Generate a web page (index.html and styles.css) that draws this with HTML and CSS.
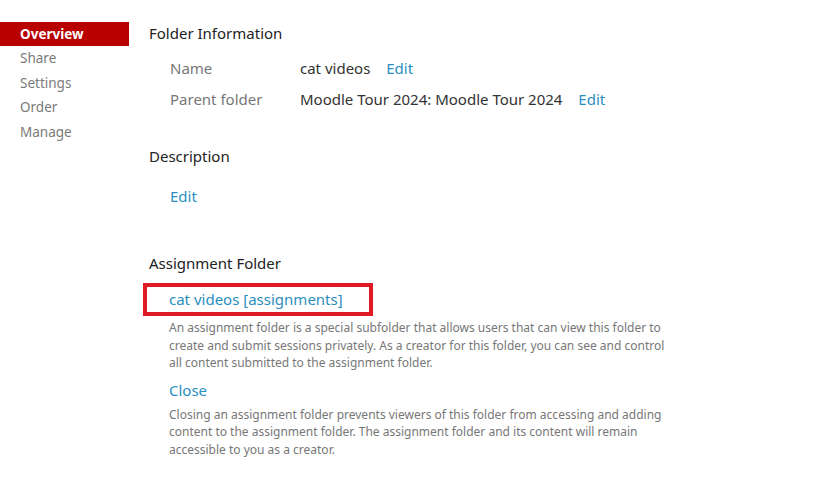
FILE: index.html
```html
<!DOCTYPE html>
<html>
<head>
<meta charset="utf-8">
<link rel="stylesheet" href="styles.css">
</head>
<body>
<div class="page">
  <nav class="sidebar">
    <div class="nav-item active">Overview</div>
    <div class="nav-item">Share</div>
    <div class="nav-item">Settings</div>
    <div class="nav-item">Order</div>
    <div class="nav-item">Manage</div>
  </nav>
  <main class="content">
    <h2 class="section-title">Folder Information</h2>
    <div class="info-table">
      <div class="info-label">Name</div>
      <div class="info-value">cat videos <a class="link edit">Edit</a></div>
      <div class="info-label">Parent folder</div>
      <div class="info-value">Moodle Tour 2024: Moodle Tour 2024 <a class="link edit">Edit</a></div>
    </div>
    <h2 class="section-title desc-title">Description</h2>
    <div class="desc-edit"><a class="link">Edit</a></div>
    <h2 class="section-title assign-title">Assignment Folder</h2>
    <div class="assign-box"><a class="link">cat videos [assignments]</a></div>
    <p class="help">An assignment folder is a special subfolder that allows users that can view this folder to create and submit sessions privately. As a creator for this folder, you can see and control all content submitted to the assignment folder.</p>
    <div class="close-link"><a class="link">Close</a></div>
    <p class="help help-close">Closing an assignment folder prevents viewers of this folder from accessing and adding content to the assignment folder. The assignment folder and its content will remain accessible to you as a creator.</p>
  </main>
</div>
</body>
</html>
```
FILE: styles.css
```css
* { box-sizing: border-box; }
body {
  margin: 0;
  background: #fff;
  font-family: "Noto Sans", "Open Sans", sans-serif;
  color: #222;
}
.page {
  display: flex;
  padding-top: 22px;
}
.sidebar {
  width: 129px;
  flex: none;
  display: flex;
  flex-direction: column;
}
.nav-item {
  height: 24.5px;
  line-height: 25px;
  padding-left: 20px;
  font-size: 13.5px;
  color: #7a7a7a;
}
.nav-item.active {
  background: #b80000;
  color: #fff;
  font-weight: 700;
  height: 24px;
  line-height: 24px;
}
.content {
  padding-left: 20px;
  width: 540px;
}
.section-title {
  margin: 0;
  font-size: 15px;
  font-weight: 400;
  line-height: 22px;
  color: #222;
}
.info-table {
  display: grid;
  grid-template-columns: 130px auto;
  row-gap: 9px;
  padding-left: 21px;
  margin-top: 13px;
  font-size: 15px;
  line-height: 22px;
}
.info-label { color: #777; }
.info-value { color: #333; }
.link { color: #2a8fc0; text-decoration: none; }
.edit { margin-left: 12px; }
.desc-title { margin-top: 35px; }
.desc-edit {
  padding-left: 21px;
  margin-top: 18px;
  font-size: 15px;
  line-height: 22px;
}
.assign-title { margin-top: 45px; }
.assign-box {
  margin-top: 9px;
  margin-left: -6px;
  width: 230px;
  border: 4px solid #e11b25;
  padding: 0 0 0 22px;
  font-size: 15px;
  line-height: 25px;
}
.help {
  margin: 3px 0 0 20px;
  font-size: 12px;
  line-height: 17.5px;
  color: #777;
}
.help-close { margin-top: 5px; }
.close-link {
  margin-top: 7px;
  padding-left: 20px;
  font-size: 15px;
  line-height: 22px;
}
```
